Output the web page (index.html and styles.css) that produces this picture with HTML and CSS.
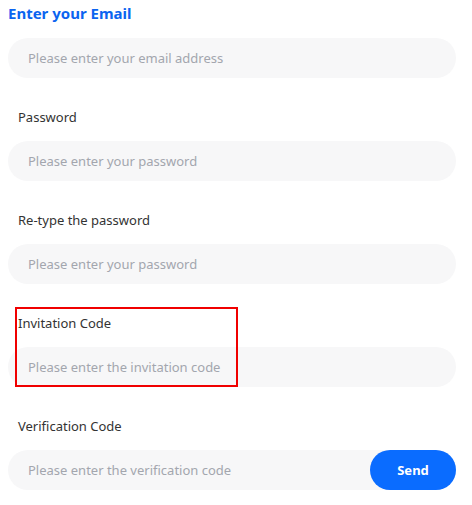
FILE: index.html
```html
<!DOCTYPE html>
<html>
<head>
<meta charset="utf-8">
<link rel="stylesheet" href="styles.css">
</head>
<body>
<div class="form">
  <div class="title">Enter your Email</div>
  <div class="input"><span class="ph">Please enter your email address</span></div>

  <div class="label">Password</div>
  <div class="input"><span class="ph">Please enter your password</span></div>

  <div class="label">Re-type the password</div>
  <div class="input"><span class="ph">Please enter your password</span></div>

  <div class="field-wrap">
    <div class="label">Invitation Code</div>
    <div class="input"><span class="ph">Please enter the invitation code</span></div>
    <div class="highlight"></div>
  </div>

  <div class="label">Verification Code</div>
  <div class="input with-btn"><span class="ph">Please enter the verification code</span><button class="send">Send</button></div>
</div>
</body>
</html>
```

FILE: styles.css
```css
html, body {
  margin: 0;
  padding: 0;
  background: #ffffff;
}
body {
  font-family: "Noto Sans", "Open Sans", sans-serif;
  width: 472px;
}
.form {
  padding: 0 16px 0 8px;
  display: flex;
  flex-direction: column;
}
.title {
  font-size: 15px;
  font-weight: 700;
  color: #0b64f0;
  line-height: 26px;
  height: 26px;
  margin-bottom: 12px;
}
.input {
  height: 40px;
  border-radius: 20px;
  background: #f7f7f8;
  display: flex;
  align-items: center;
  padding-left: 20px;
  box-sizing: border-box;
}
.ph {
  font-size: 13px;
  color: #a3a6ae;
}
.label {
  font-size: 13px;
  color: #333333;
  line-height: 20px;
  margin: 29px 0 14px 10px;
}
.field-wrap {
  position: relative;
  display: flex;
  flex-direction: column;
}
.highlight {
  position: absolute;
  left: 7px;
  top: 23px;
  width: 223px;
  height: 80px;
  border: 2px solid #f00000;
  box-sizing: border-box;
}
.with-btn {
  justify-content: space-between;
}
.send {
  height: 40px;
  width: 86px;
  border: none;
  border-radius: 20px;
  background: #0a6cff;
  color: #ffffff;
  font-family: "Noto Sans", sans-serif;
  font-size: 13px;
  font-weight: 700;
  padding: 0;
}
```
